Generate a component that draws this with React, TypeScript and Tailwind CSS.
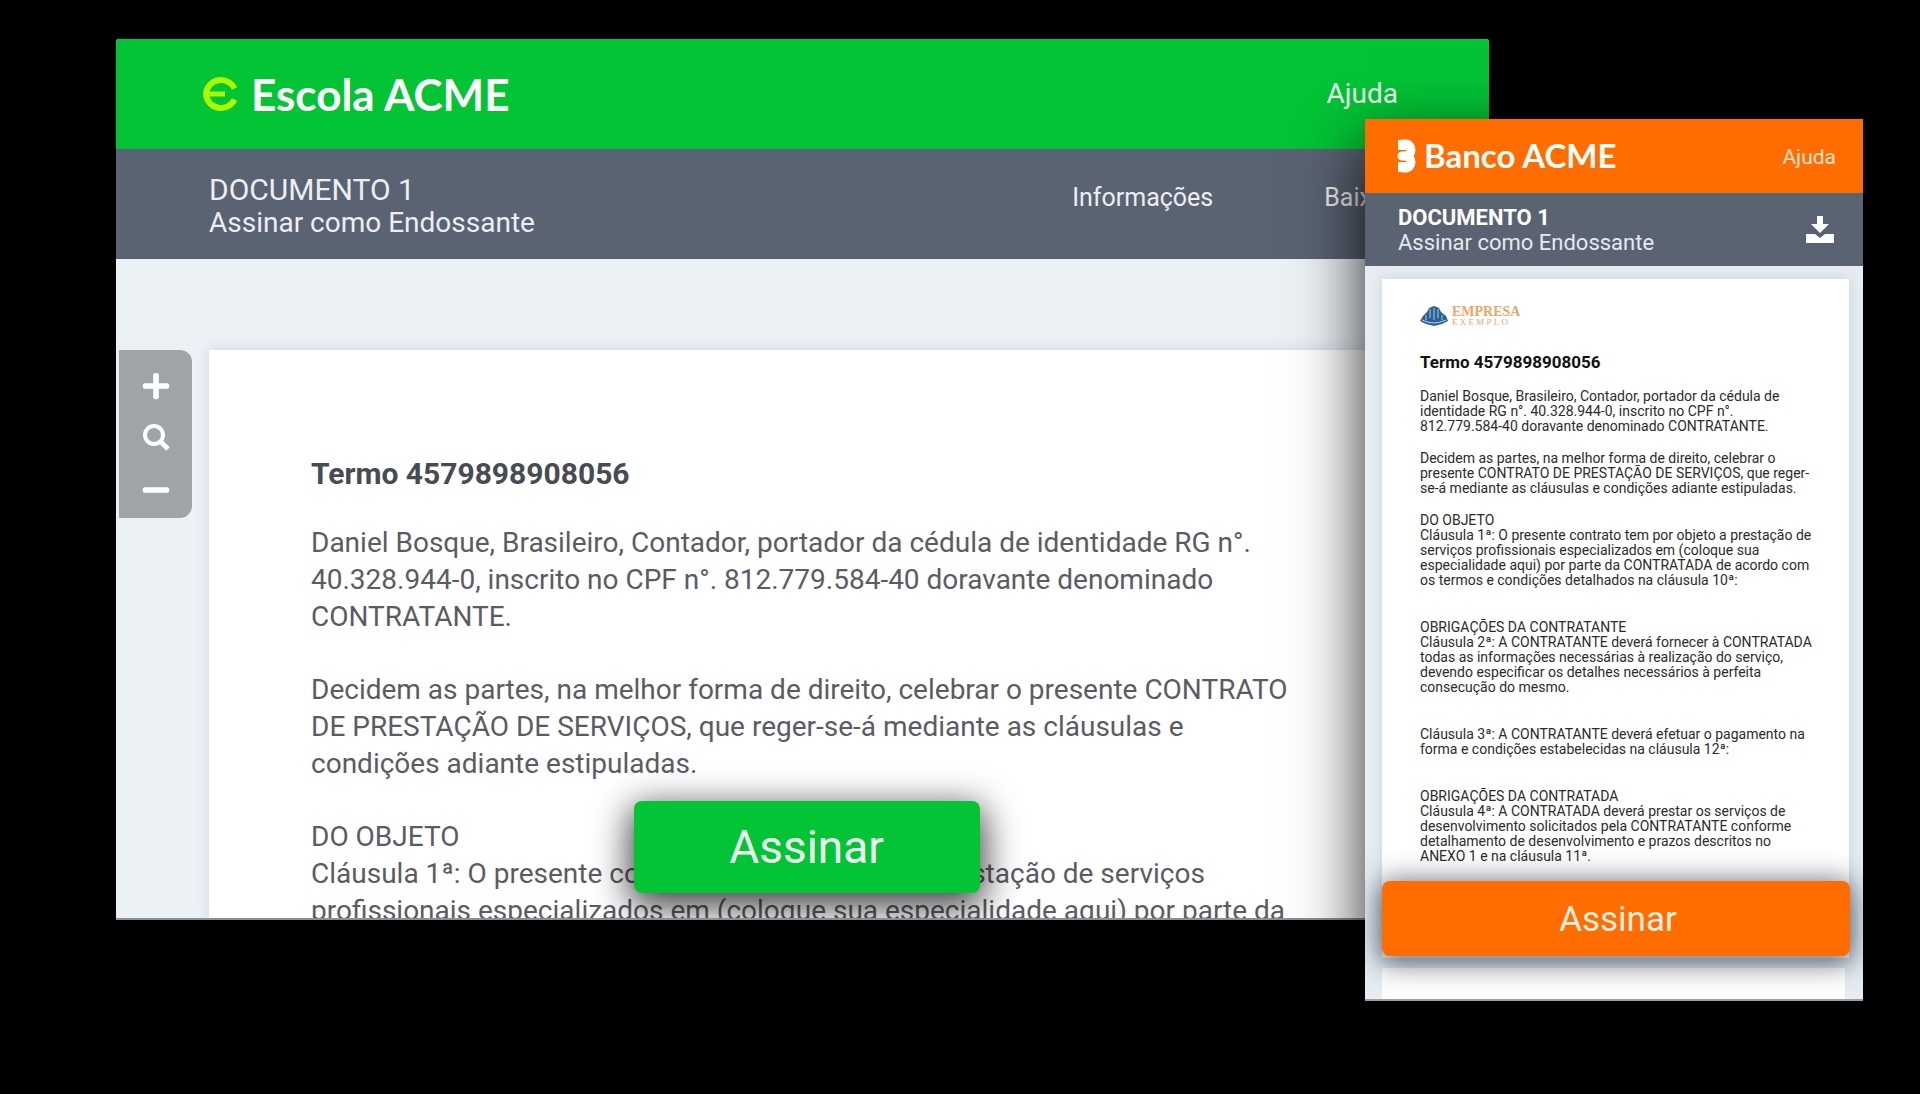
import type { ReactNode } from 'react';
import { FaMinus, FaPlus } from 'react-icons/fa';

function SchoolMark() {
  return (
    <svg viewBox="0 0 36 36" className="size-9 shrink-0" fill="none" stroke="#a8fb00" strokeWidth="6" aria-hidden="true">
      <path d="M32.5 12.5 A15 15 0 0 0 4 18 A15 15 0 0 0 32.5 23.5" />
      <path d="M6 18 H23" strokeWidth="5" />
    </svg>
  );
}

function BankMark() {
  return (
    <svg viewBox="0 0 19 34" className="h-[34px] w-[19px] shrink-0" fill="none" stroke="#fff" strokeWidth="9" strokeLinecap="round" aria-hidden="true">
      <path d="M6 5 H9 A5 6 0 0 1 9 17 H5" />
      <path d="M9 17 A5 6 0 0 1 9 29 H6" />
      <path d="M5 5 V7 M5 27 V29" strokeWidth="8" strokeLinecap="square" />
    </svg>
  );
}

function CompanyMark() {
  return (
    <svg viewBox="0 0 28 20" className="h-5 w-7 shrink-0" aria-hidden="true">
      <path d="M9 2 L14 0 L19 2 L21 6 L26 10 L28 15 L22 18 L14 20 L6 18 L0 15 L3 10 L7 6 Z" fill="#2c6196" />
      <path d="M10 3 V12 M14 2 V14 M18 3 V12 M6 9 V14 M22 9 V14" stroke="#a9c8e4" strokeWidth="1" />
      <path d="M2 14 Q14 20 26 14" stroke="#bcd3e8" strokeWidth="1" fill="none" />
    </svg>
  );
}

function SearchGlyph() {
  return (
    <svg viewBox="0 0 28 28" className="size-7" fill="none" stroke="#fff" aria-hidden="true">
      <circle cx="12" cy="11" r="9" strokeWidth="4" />
      <path d="M18 17 L26 25" strokeWidth="5" />
    </svg>
  );
}

function DownloadGlyph() {
  return (
    <svg viewBox="0 0 28 28" className="size-7" fill="#fff" aria-hidden="true">
      <path d="M11 0 H17 V8 H23 L14 17 L5 8 H11 Z" />
      <path d="M0 18 H9 L14 22 L19 18 H28 V27 H0 Z" />
    </svg>
  );
}

function Lines({ rows }: { rows: string[] }) {
  return (
    <p>
      {rows.map((row) => (
        <span key={row} className="block whitespace-nowrap">
          {row}
        </span>
      ))}
    </p>
  );
}

function Brand({ children }: { children: ReactNode }) {
  return <span className="font-['Lato',sans-serif] font-bold whitespace-nowrap text-white">{children}</span>;
}

function DesktopWindow() {
  return (
    <section aria-label="Escola ACME" className="flex h-[881px] min-w-0 flex-1 flex-col overflow-hidden rounded-t-[3px] border-b-2 border-[#8d8f93] bg-[#ecf1f6]">
      <header className="flex h-[110px] shrink-0 items-center justify-between bg-[#03c435] pr-[91px] pl-[86px]">
        <div className="flex items-center gap-[13px] text-[44px]">
          <SchoolMark />
          <Brand>Escola ACME</Brand>
        </div>
        <a href="#ajuda" className="text-[28px] text-[#eafbee]">Ajuda</a>
      </header>
      <div className="flex h-[110px] shrink-0 items-center justify-between bg-[#5a6372] pl-[93px] text-[#eceef1]">
        <div className="pt-1 text-[28px] leading-[33px]">
          <h1 className="text-[30px]">DOCUMENTO 1</h1>
          <p>Assinar como Endossante</p>
        </div>
        <nav className="flex gap-[111px] pr-[95px] pb-3 text-[25px]">
          <a href="#informacoes">Informações</a>
          <a href="#baixar">Baixar</a>
        </nav>
      </div>
      <div className="relative flex min-h-0 flex-1 gap-[17px] pt-[91px] pr-[93px] pl-[3px]">
        <div className="flex h-[168px] w-[73px] shrink-0 flex-col items-center gap-6 rounded-r-xl bg-[#a0a4a8] pt-[22px] text-[30px] text-white">
          <button type="button" aria-label="Aumentar zoom" className="flex h-7 items-center"><FaPlus /></button>
          <button type="button" aria-label="Redefinir zoom" className="flex h-7 items-center"><SearchGlyph /></button>
          <button type="button" aria-label="Diminuir zoom" className="flex h-7 items-center"><FaMinus /></button>
        </div>
        <article className="flex min-w-0 flex-1 flex-col gap-9 bg-white pt-[105px] pl-[102px] text-[28px] leading-[37px] text-[#5b5c63] shadow-[0_0_12px_rgba(120,135,150,0.25)]">
          <h2 className="-mb-1 text-[30px] leading-[37px] font-bold text-[#474b52]">Termo 4579898908056</h2>
          <Lines rows={['Daniel Bosque, Brasileiro, Contador, portador da cédula de identidade RG n°.', '40.328.944-0, inscrito no CPF n°. 812.779.584-40 doravante denominado', 'CONTRATANTE.']} />
          <Lines rows={['Decidem as partes, na melhor forma de direito, celebrar o presente CONTRATO', 'DE PRESTAÇÃO DE SERVIÇOS, que reger-se-á mediante as cláusulas e', 'condições adiante estipuladas.']} />
          <Lines rows={['DO OBJETO', 'Cláusula 1ª: O presente contrato tem por objeto a prestação de serviços', 'profissionais especializados em (coloque sua especialidade aqui) por parte da']} />
        </article>
        <div className="absolute inset-x-0 bottom-[25px] flex justify-center pl-2">
          <button type="button" className="h-[92px] w-[346px] rounded-lg bg-[#03c435] text-[46px] text-[#effcf1] shadow-[0_10px_36px_4px_rgba(0,0,0,0.75)]">
            Assinar
          </button>
        </div>
      </div>
    </section>
  );
}

function PhoneWindow() {
  return (
    <section aria-label="Banco ACME" className="relative z-10 mt-20 -ml-[124px] flex h-[882px] w-[498px] shrink-0 flex-col overflow-hidden border-b-2 border-[#9a9ea3] bg-[#e7edf2] shadow-[0_24px_64px_rgba(0,0,0,0.85)]">
      <header className="flex h-[74px] shrink-0 items-center justify-between bg-[#ff6d00] pr-[27px] pl-8">
        <div className="flex items-center gap-2 text-[33px]">
          <BankMark />
          <Brand>Banco ACME</Brand>
        </div>
        <a href="#ajuda" className="pt-1 text-[21px] text-[#ffe3cf]">Ajuda</a>
      </header>
      <div className="flex h-[73px] shrink-0 items-center justify-between bg-[#5a6372] pr-[29px] pl-[33px] text-[22px] leading-[25px] text-[#e6e9ed]">
        <div>
          <h1 className="font-bold text-white">DOCUMENTO 1</h1>
          <p>Assinar como Endossante</p>
        </div>
        <button type="button" aria-label="Baixar documento"><DownloadGlyph /></button>
      </div>
      <div className="flex flex-col gap-[10px] pt-[13px] pr-[14px] pl-[17px]">
        <article className="flex h-[679px] flex-col bg-white pt-[26px] pl-[38px] text-[14px] leading-[15px] text-[#2b2b2b] shadow-[0_0_12px_rgba(120,135,150,0.25)]">
          <div className="flex items-center gap-1">
            <CompanyMark />
            <div className="flex flex-col font-['Liberation_Serif',serif] text-[#eda566]">
              <span className="text-[14px] leading-[13px] font-bold">EMPRESA</span>
              <span className="text-[9px] leading-[9px] tracking-[0.25em]">EXEMPLO</span>
            </div>
          </div>
          <h2 className="mt-[25px] mb-[17px] text-[17px] leading-5 font-bold text-[#111]">Termo 4579898908056</h2>
          <div className="flex flex-col gap-8">
            <div className="flex flex-col gap-[17px]">
              <Lines rows={['Daniel Bosque, Brasileiro, Contador, portador da cédula de', 'identidade RG n°. 40.328.944-0, inscrito no CPF n°.', '812.779.584-40 doravante denominado CONTRATANTE.']} />
              <Lines rows={['Decidem as partes, na melhor forma de direito, celebrar o', 'presente CONTRATO DE PRESTAÇÃO DE SERVIÇOS, que reger-', 'se-á mediante as cláusulas e condições adiante estipuladas.']} />
              <Lines rows={['DO OBJETO', 'Cláusula 1ª: O presente contrato tem por objeto a prestação de', 'serviços profissionais especializados em (coloque sua', 'especialidade aqui) por parte da CONTRATADA de acordo com', 'os termos e condições detalhados na cláusula 10ª:']} />
            </div>
            <Lines rows={['OBRIGAÇÕES DA CONTRATANTE', 'Cláusula 2ª: A CONTRATANTE deverá fornecer à CONTRATADA', 'todas as informações necessárias à realização do serviço,', 'devendo especificar os detalhes necessários à perfeita', 'consecução do mesmo.']} />
            <Lines rows={['Cláusula 3ª: A CONTRATANTE deverá efetuar o pagamento na', 'forma e condições estabelecidas na cláusula 12ª:']} />
            <Lines rows={['OBRIGAÇÕES DA CONTRATADA', 'Cláusula 4ª: A CONTRATADA deverá prestar os serviços de', 'desenvolvimento solicitados pela CONTRATANTE conforme', 'detalhamento de desenvolvimento e prazos descritos no', 'ANEXO 1 e na cláusula 11ª.']} />
          </div>
        </article>
        <article className="mr-1 h-10 bg-white" />
      </div>
      <button type="button" className="absolute right-[13px] bottom-[43px] left-[17px] h-[75px] rounded-lg bg-[#ff6d00] pt-1 pl-1 text-[35px] text-[#fff0e4] shadow-[0_4px_28px_4px_rgba(40,50,70,0.7)]">
        Assinar
      </button>
    </section>
  );
}

export default function App() {
  return (
    <main className="flex min-h-screen items-start bg-black pt-[39px] pr-[57px] pl-[116px] font-['Roboto',sans-serif]">
      <DesktopWindow />
      <PhoneWindow />
    </main>
  );
}
